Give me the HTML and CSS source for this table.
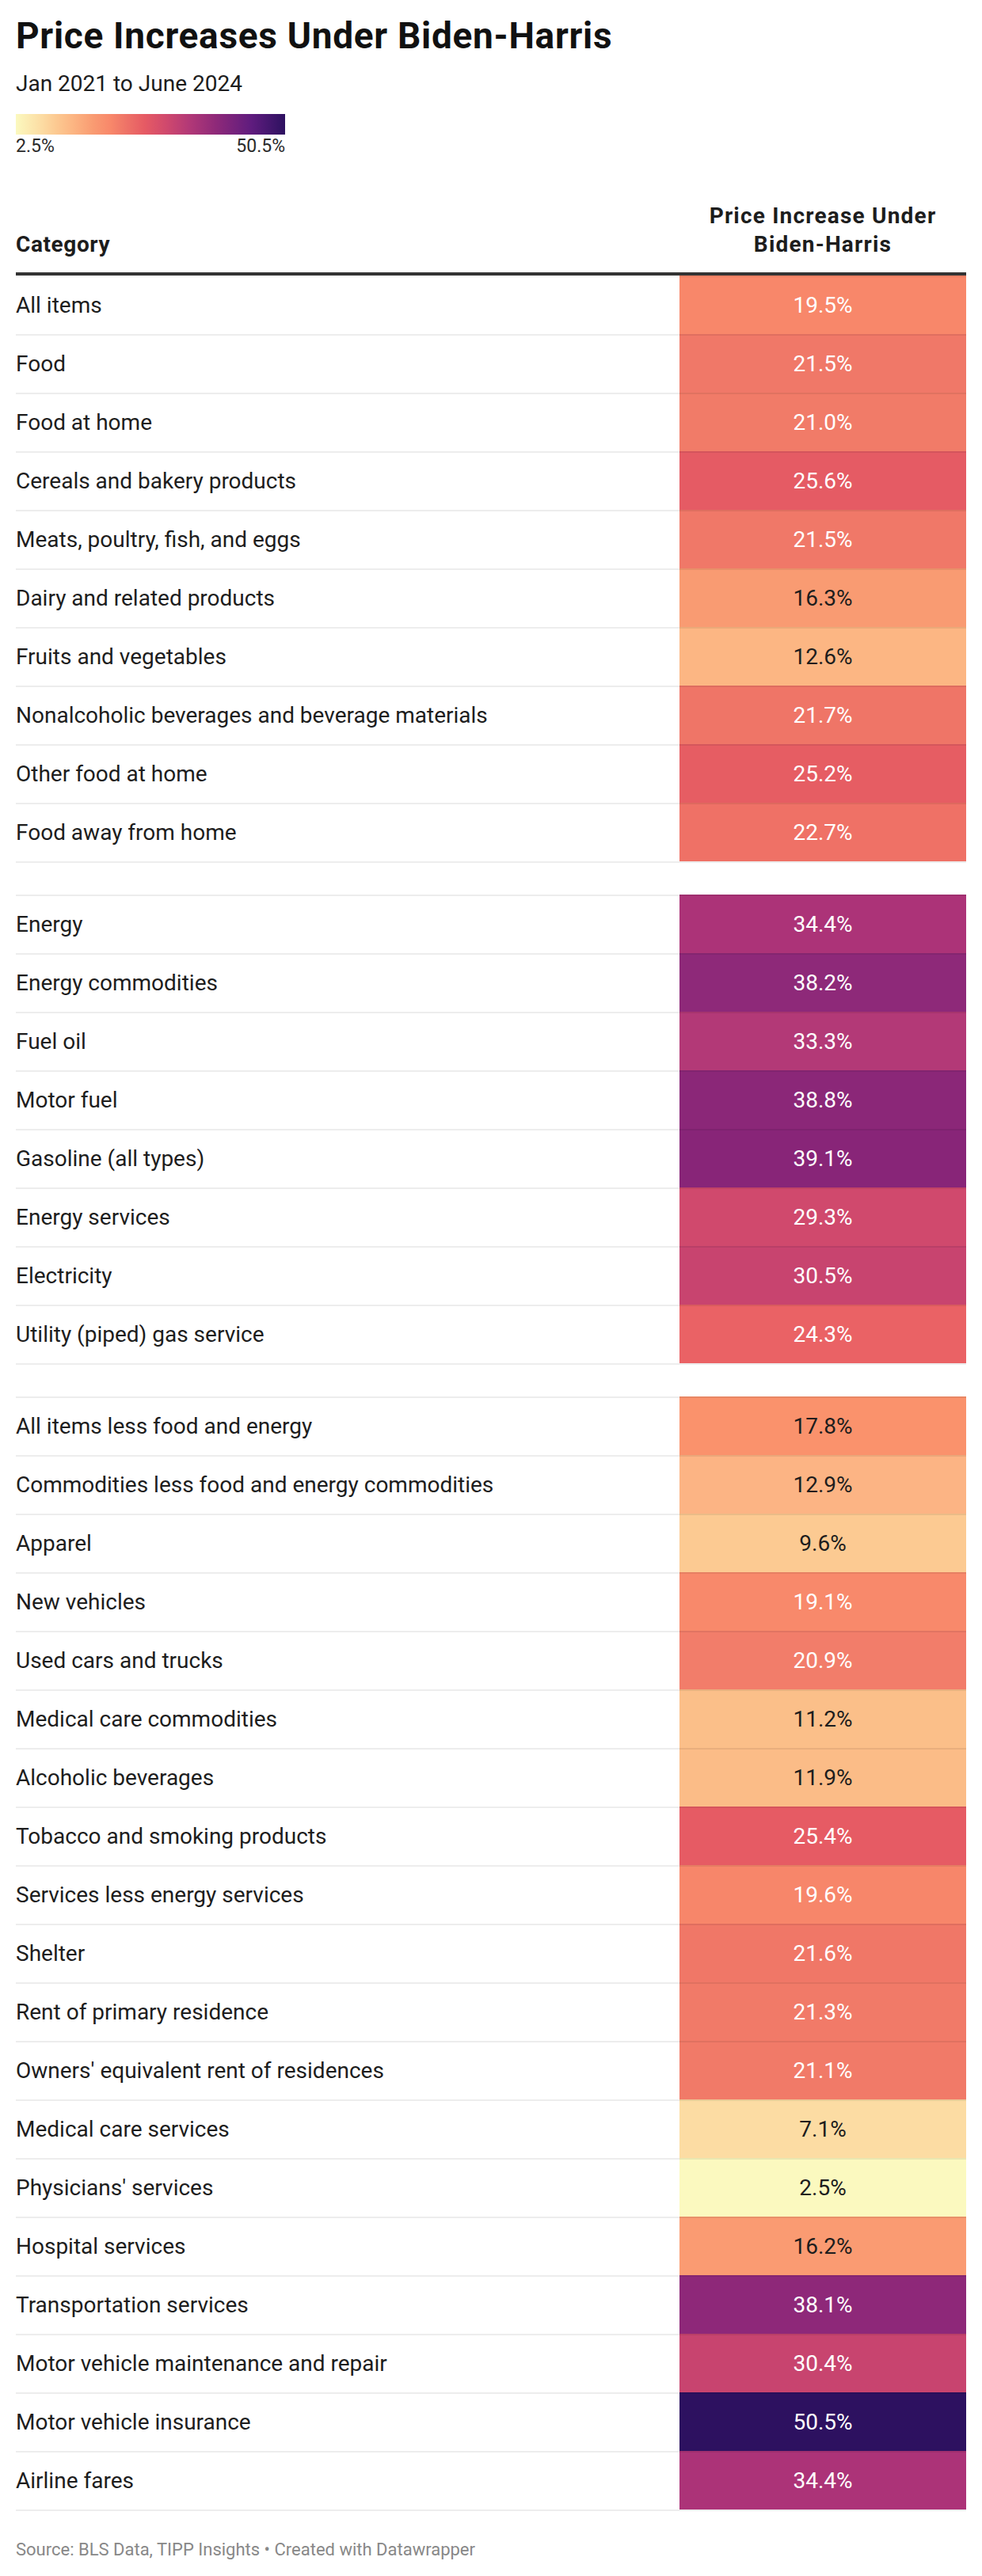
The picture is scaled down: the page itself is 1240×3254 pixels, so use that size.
FILE: index.html
```html
<!DOCTYPE html>
<html lang="en">
<head>
<meta charset="utf-8">
<title>Price Increases Under Biden-Harris</title>
<link rel="stylesheet" href="styles.css">
</head>
<body>
<div class="chart">
  <h1 class="title">Price Increases Under Biden-Harris</h1>
  <p class="subtitle">Jan 2021 to June 2024</p>
  <div class="legend">
    <div class="legend-bar"></div>
    <div class="legend-labels"><span>2.5%</span><span>50.5%</span></div>
  </div>
  <div class="thead">
    <div class="th th-cat">Category</div>
    <div class="th th-val">Price Increase Under Biden-Harris</div>
  </div>
  <div class="group">
    <div class="row"><div class="cell label">All items</div><div class="cell val" style="background:#f8876a">19.5%</div></div>
    <div class="row"><div class="cell label">Food</div><div class="cell val" style="background:#f07868">21.5%</div></div>
    <div class="row"><div class="cell label">Food at home</div><div class="cell val" style="background:#f17b68">21.0%</div></div>
    <div class="row"><div class="cell label">Cereals and bakery products</div><div class="cell val" style="background:#e55b64">25.6%</div></div>
    <div class="row"><div class="cell label">Meats, poultry, fish, and eggs</div><div class="cell val" style="background:#f07868">21.5%</div></div>
    <div class="row"><div class="cell label">Dairy and related products</div><div class="cell val dark" style="background:#f99b72">16.3%</div></div>
    <div class="row"><div class="cell label">Fruits and vegetables</div><div class="cell val dark" style="background:#fcb683">12.6%</div></div>
    <div class="row"><div class="cell label">Nonalcoholic beverages and beverage materials</div><div class="cell val" style="background:#ef7567">21.7%</div></div>
    <div class="row"><div class="cell label">Other food at home</div><div class="cell val" style="background:#e65d63">25.2%</div></div>
    <div class="row"><div class="cell label">Food away from home</div><div class="cell val" style="background:#ef7166">22.7%</div></div>
  </div>
  <div class="group">
    <div class="row"><div class="cell label">Energy</div><div class="cell val" style="background:#ac3378">34.4%</div></div>
    <div class="row"><div class="cell label">Energy commodities</div><div class="cell val" style="background:#8e2979">38.2%</div></div>
    <div class="row"><div class="cell label">Fuel oil</div><div class="cell val" style="background:#b33977">33.3%</div></div>
    <div class="row"><div class="cell label">Motor fuel</div><div class="cell val" style="background:#8b2778">38.8%</div></div>
    <div class="row"><div class="cell label">Gasoline (all types)</div><div class="cell val" style="background:#882578">39.1%</div></div>
    <div class="row"><div class="cell label">Energy services</div><div class="cell val" style="background:#d0496d">29.3%</div></div>
    <div class="row"><div class="cell label">Electricity</div><div class="cell val" style="background:#c8446f">30.5%</div></div>
    <div class="row"><div class="cell label">Utility (piped) gas service</div><div class="cell val" style="background:#ea6265">24.3%</div></div>
  </div>
  <div class="group">
    <div class="row"><div class="cell label">All items less food and energy</div><div class="cell val dark" style="background:#fa926c">17.8%</div></div>
    <div class="row"><div class="cell label">Commodities less food and energy commodities</div><div class="cell val dark" style="background:#fcb484">12.9%</div></div>
    <div class="row"><div class="cell label">Apparel</div><div class="cell val dark" style="background:#fcca92">9.6%</div></div>
    <div class="row"><div class="cell label">New vehicles</div><div class="cell val" style="background:#f8896b">19.1%</div></div>
    <div class="row"><div class="cell label">Used cars and trucks</div><div class="cell val" style="background:#f27d6a">20.9%</div></div>
    <div class="row"><div class="cell label">Medical care commodities</div><div class="cell val dark" style="background:#fbbf89">11.2%</div></div>
    <div class="row"><div class="cell label">Alcoholic beverages</div><div class="cell val dark" style="background:#fbbc87">11.9%</div></div>
    <div class="row"><div class="cell label">Tobacco and smoking products</div><div class="cell val" style="background:#e65b64">25.4%</div></div>
    <div class="row"><div class="cell label">Services less energy services</div><div class="cell val" style="background:#f7866a">19.6%</div></div>
    <div class="row"><div class="cell label">Shelter</div><div class="cell val" style="background:#f07767">21.6%</div></div>
    <div class="row"><div class="cell label">Rent of primary residence</div><div class="cell val" style="background:#f17a68">21.3%</div></div>
    <div class="row"><div class="cell label">Owners' equivalent rent of residences</div><div class="cell val" style="background:#f17a68">21.1%</div></div>
    <div class="row"><div class="cell label">Medical care services</div><div class="cell val dark" style="background:#fcdca3">7.1%</div></div>
    <div class="row"><div class="cell label">Physicians' services</div><div class="cell val dark" style="background:#fbf9bf">2.5%</div></div>
    <div class="row"><div class="cell label">Hospital services</div><div class="cell val dark" style="background:#fa9b72">16.2%</div></div>
    <div class="row"><div class="cell label">Transportation services</div><div class="cell val" style="background:#8e2879">38.1%</div></div>
    <div class="row"><div class="cell label">Motor vehicle maintenance and repair</div><div class="cell val" style="background:#c8446f">30.4%</div></div>
    <div class="row"><div class="cell label">Motor vehicle insurance</div><div class="cell val" style="background:#2d1160">50.5%</div></div>
    <div class="row"><div class="cell label">Airline fares</div><div class="cell val" style="background:#ac3378">34.4%</div></div>
  </div>
  <p class="footer">Source: BLS Data, TIPP Insights • Created with Datawrapper</p>
</div>
</body>
</html>
```

FILE: styles.css
```css
html, body {
  margin: 0;
  padding: 0;
  background: #ffffff;
}

body {
  font-family: Roboto, "Liberation Sans", Arial, sans-serif;
  color: #1d1d1d;
}

.chart {
  padding: 18px 20px 22px;
}

.title {
  margin: 0;
  font-size: 46px;
  line-height: 55px;
  font-weight: 700;
  letter-spacing: 0.7px;
  color: #111111;
}

.subtitle {
  margin: 15px 0 0;
  font-size: 28px;
  line-height: 36px;
  font-weight: 400;
  color: #1d1d1d;
}

.legend {
  margin-top: 20px;
  width: 340px;
}

.legend-bar {
  height: 26px;
  background: linear-gradient(to right,
    #fbf9bf 0%,
    #fcdca3 9.6%,
    #fcca92 14.8%,
    #fcb683 21%,
    #f99b72 28.75%,
    #f8876a 35.4%,
    #f07868 39.6%,
    #e65b64 47.7%,
    #d0496d 55.8%,
    #b33977 64.2%,
    #8e2979 74.4%,
    #5f1c7e 87.5%,
    #2d1160 100%);
}

.legend-labels {
  display: flex;
  justify-content: space-between;
  margin-top: 2px;
  font-size: 23px;
  line-height: 26px;
  color: #2a2a2a;
}

.thead {
  display: grid;
  grid-template-columns: 1fr 362px;
  align-items: end;
  margin-top: 57px;
  padding-bottom: 17px;
  border-bottom: 4px solid #333333;
  font-size: 28px;
  line-height: 36px;
  font-weight: 700;
  color: #1d1d1d;
}

.th-cat {
  letter-spacing: 0.6px;
}

.th-val {
  text-align: center;
  padding: 0 10px;
  letter-spacing: 1.2px;
}

.group + .group {
  margin-top: 40px;
}

.group {
  border-bottom: 2px solid #ededed;
}

.row {
  display: grid;
  grid-template-columns: 1fr 362px;
}

.cell {
  height: 72px;
  display: flex;
  align-items: center;
  font-size: 28px;
  line-height: 36px;
  border-top: 2px solid rgba(0, 0, 0, 0.07);
}

.group:first-of-type .row:first-child .cell {
  border-top: none;
}

.label {
  color: #1d1d1d;
}

.val {
  justify-content: center;
  color: #ffffff;
}

.val.dark {
  color: #1d1d1d;
}

.footer {
  margin: 36px 0 0;
  font-size: 22px;
  line-height: 26px;
  color: #888888;
}
```
